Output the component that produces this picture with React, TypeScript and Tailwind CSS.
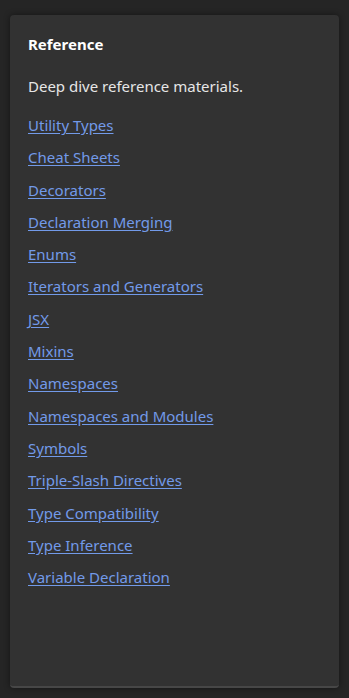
const LINKS = [
  "Utility Types",
  "Cheat Sheets",
  "Decorators",
  "Declaration Merging",
  "Enums",
  "Iterators and Generators",
  "JSX",
  "Mixins",
  "Namespaces",
  "Namespaces and Modules",
  "Symbols",
  "Triple-Slash Directives",
  "Type Compatibility",
  "Type Inference",
  "Variable Declaration",
]

export default function App() {
  return (
    <div className="h-[698px] bg-[#252525] px-[10px] pt-[15px] pb-[10px] font-['Noto_Sans',sans-serif]">
      <div className="flex h-full flex-col rounded-[4px] border-b-2 border-[#474747] bg-[#323232] px-[18px] pt-[19px] shadow-[0_0_6px_rgba(0,0,0,0.45)]">
        <h2 className="text-[15px] leading-[20px] font-bold text-white">Reference</h2>
        <p className="mt-[22px] text-[15px] leading-[20px] text-[#e6e6e6]">Deep dive reference materials.</p>
        <ul className="mt-[19px] flex flex-col gap-[12.3px] leading-[20px]">
          {LINKS.map((l) => (
            <li key={l} className="h-[20px]">
              <a href="#" className="text-[15px] leading-[20px] text-[#729ae9] underline underline-offset-2">
                {l}
              </a>
            </li>
          ))}
        </ul>
      </div>
    </div>
  )
}
